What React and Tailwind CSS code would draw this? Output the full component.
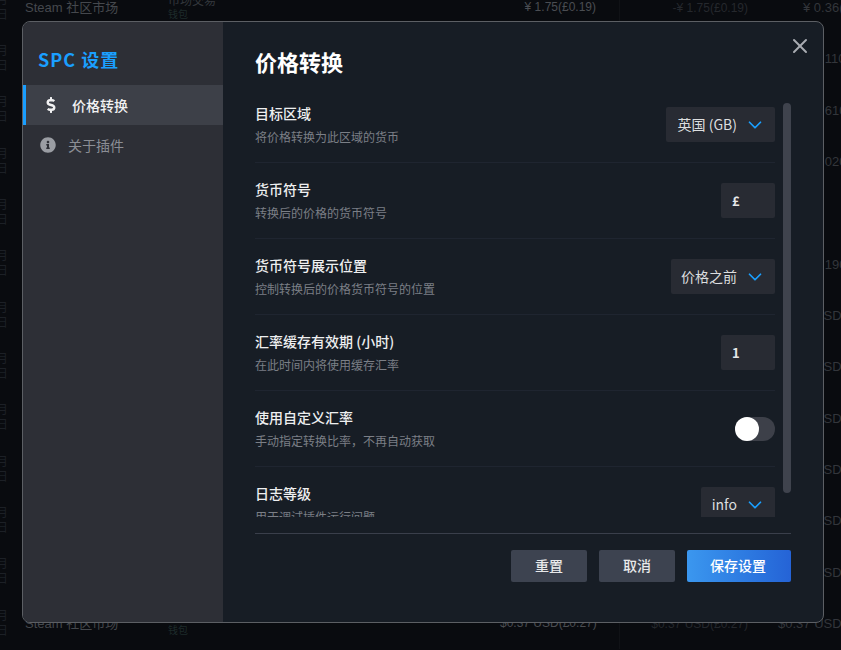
import React from "react";
import { FaDollarSign, FaInfoCircle } from "react-icons/fa";
import { ChevronDown, X } from "lucide-react";

const CJK = "[font-family:'Noto_Sans_CJK_SC','Noto_Sans',sans-serif]";

// right hand column of the page behind the dialog, only its tail shows
const bgRows = [
  { text: "¥ 0.36(£0.04)", pad: "pl-[55px]" },
  { text: "¥ 0.110(", pad: "pl-[55px]" },
  { text: "¥ 0.610(", pad: "pl-[55px]" },
  { text: "¥ 0.020(", pad: "pl-[55px]" },
  { text: "", pad: "pl-[55px]" },
  { text: "¥ 0.190(", pad: "pl-[55px]" },
  { text: "$0.37 USD(", pad: "pl-[30px]" },
  { text: "$0.37 USD(", pad: "pl-[30px]" },
  { text: "$0.37 USD(", pad: "pl-[30px]" },
  { text: "$0.37 USD(", pad: "pl-[30px]" },
  { text: "$0.37 USD(", pad: "pl-[30px]" },
  { text: "$0.37 USD(", pad: "pl-[30px]" },
  { text: "$0.37 USD(", pad: "pl-[30px]" },
];

const settings = [
  { title: "目标区域", desc: "将价格转换为此区域的货币", type: "select", value: "英国 (GB)", width: "w-[109px]" },
  { title: "货币符号", desc: "转换后的价格的货币符号", type: "input", value: "£" },
  { title: "货币符号展示位置", desc: "控制转换后的价格货币符号的位置", type: "select", value: "价格之前", width: "w-[104px]" },
  { title: "汇率缓存有效期 (小时)", desc: "在此时间内将使用缓存汇率", type: "input", value: "1" },
  { title: "使用自定义汇率", desc: "手动指定转换比率，不再自动获取", type: "toggle" },
  { title: "日志等级", desc: "用于调试插件运行问题", type: "select", value: "info", width: "w-[74px]" },
];

const BackgroundTable = () => {
  return (
    <div className="h-[650px] overflow-hidden bg-[#090b0f] font-['Liberation_Sans','Noto_Sans_CJK_SC',sans-serif]">
      <div className="-mt-[18px] w-[900px]">
        {bgRows.map((row, index) => (
          <div key={index} className="flex h-[51.33px] items-center">
            <div className="flex w-[25px] shrink-0 flex-col text-[12px] leading-[15px] text-[#1c2026]">
              <span className="-ml-[4px]">月</span>
              <span className="-ml-[4px]">日</span>
            </div>
            <div className="w-[143px] shrink-0 text-[13px] text-[#45484d]">
              {(index === 0 || index === 12) && "Steam 社区市场"}
            </div>
            <div className="w-[332px] shrink-0 text-[12px] leading-[14px]">
              {(index === 0 || index === 12) && (
                <div className="flex flex-col text-[#33373c]">
                  <span>市场交易</span>
                  <span className="text-[10px] text-[#1d2a2a]">钱包</span>
                </div>
              )}
            </div>
            <div className="h-full w-[120px] shrink-0 whitespace-nowrap border-r border-[#101216] pr-[23px] text-right text-[12px] leading-[51px] text-[#4a4d52]">
              {index === 0 && "¥ 1.75(£0.19)"}
              {index === 12 && "$0.37 USD(£0.27)"}
            </div>
            <div className="w-[128px] shrink-0 whitespace-nowrap text-right text-[12px] text-[#25282d]">
              {index === 0 && "-¥ 1.75(£0.19)"}
              {index === 12 && "$0.37 USD(£0.27)"}
            </div>
            <div className={`${row.pad} whitespace-nowrap text-[13px] text-[#33363b]`}>{row.text}</div>
          </div>
        ))}
      </div>
    </div>
  );
};

const SettingControl = ({ item }) => {
  if (item.type === "toggle") {
    return (
      <div className="h-6 w-10 rounded-full bg-[#3d4049]">
        <div className="h-6 w-6 rounded-full bg-white" />
      </div>
    );
  }
  if (item.type === "input") {
    return (
      <div className="flex h-[35px] w-[54px] items-center rounded-[2px] bg-[#282b33] pl-[11px] text-[13px] font-semibold text-[#e6e7e9]">
        {item.value}
      </div>
    );
  }
  return (
    <div className={`flex h-[35px] ${item.width} items-center justify-end gap-[7px] rounded-[2px] bg-[#282b33] pr-[9px] text-[14px] text-[#dcdedf]`}>
      <span className="whitespace-nowrap">{item.value}</span>
      <ChevronDown size={22} strokeWidth={1.9} className="text-[#1a9fff]" />
    </div>
  );
};

const App = () => {
  return (
    <div className="relative h-[650px] w-[841px] overflow-hidden">
      <BackgroundTable />

      <div className={`absolute left-[22px] top-[21px] flex h-[602px] w-[802px] overflow-hidden rounded-lg border border-[#5c5f64] bg-[#171d25] ${CJK}`}>
        <aside className="w-[200px] shrink-0 bg-[#2d2f36]">
          <h1 className="ml-[15px] mt-[25px] h-[38px] text-[18px] font-bold leading-[25px] tracking-[1px] text-[#1a9fff]">SPC 设置</h1>
          <div className="flex h-10 items-center border-l-[3px] border-[#1a9fff] bg-[#3d4048] pl-[17px] text-[14px] font-medium text-[#f2f2f3]">
            <FaDollarSign size={16} />
            <span className="ml-[13px]">价格转换</span>
          </div>
          <div className="flex h-10 items-center pl-[17px] text-[14px] text-[#8b8e95]">
            <FaInfoCircle size={16} className="text-[#9a9da3]" />
            <span className="ml-[12px]">关于插件</span>
          </div>
        </aside>

        <main className="relative flex min-w-0 flex-1 flex-col px-8">
          <button className="absolute right-[11px] top-[12px] text-[#a9acb2]">
            <X size={24} strokeWidth={2} />
          </button>
          <h2 className="h-[65px] pt-[23px] text-[22px] font-bold leading-[33px] text-white">价格转换</h2>

          <div className="relative h-[430px] overflow-hidden">
            {settings.map((item, index) => (
              <div key={index} className="flex h-[76px] w-[520px] shrink-0 items-center justify-between border-b border-[#1f2530]">
                <div>
                  <div className="text-[14px] font-medium leading-[21px] text-[#eeeff0]">{item.title}</div>
                  <div className="mt-[4px] text-[12px] leading-[18px] text-[#7b7f86]">{item.desc}</div>
                </div>
                <SettingControl item={item} />
              </div>
            ))}
            {/* scrollbar thumb */}
            <div className="absolute right-0 top-4 h-[390px] w-2 rounded-full bg-[#3f434d]" />
          </div>

          <div className="mt-4 flex justify-end gap-3 border-t border-[#3a3f4b] pt-4">
            <button className="h-8 w-[76px] rounded-[2px] bg-[#3d4350] pb-0.5 text-[14px] font-medium text-[#e8e9ea]">重置</button>
            <button className="h-8 w-[76px] rounded-[2px] bg-[#3d4350] pb-0.5 text-[14px] font-medium text-[#e8e9ea]">取消</button>
            <button className="h-8 w-[104px] rounded-[2px] bg-gradient-to-r from-[#3b97ef] to-[#2563d6] pb-0.5 pr-0.5 text-[14px] font-medium text-white">保存设置</button>
          </div>
        </main>
      </div>
    </div>
  );
};

export default App;
